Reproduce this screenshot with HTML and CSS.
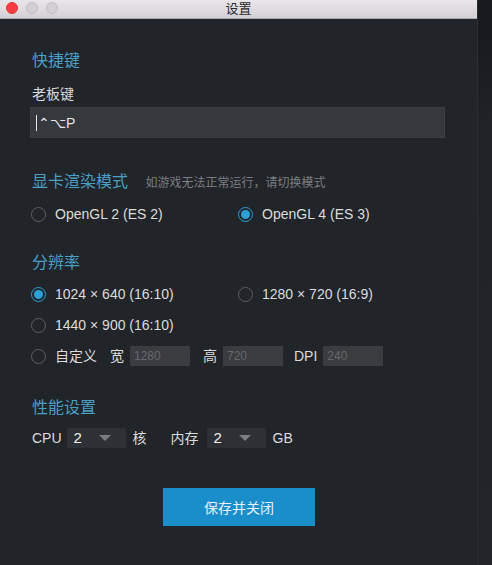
FILE: index.html
```html
<!DOCTYPE html>
<html lang="zh-CN">
<head>
    <meta charset="UTF-8">
    <title>设置</title>
    <link rel="stylesheet" href="styles.css">
</head>
<body>
    <div class="window">
        <div class="titlebar">
            <div class="lights">
                <span class="light close"></span>
                <span class="light"></span>
                <span class="light"></span>
            </div>
            <span class="title">设置</span>
        </div>

        <div class="content">
            <h2 class="heading">快捷键</h2>
            <div class="label">老板键</div>
            <div class="hotkey"><span class="caret"></span>⌃⌥P</div>

            <h2 class="heading heading-gap">显卡渲染模式 <span class="hint">如游戏无法正常运行，请切换模式</span></h2>
            <div class="radio-grid">
                <label class="radio"><span class="dot"></span>OpenGL 2 (ES 2)</label>
                <label class="radio checked"><span class="dot"></span>OpenGL 4 (ES 3)</label>
            </div>

            <h2 class="heading heading-gap-sm">分辨率</h2>
            <div class="radio-grid rows">
                <label class="radio checked"><span class="dot"></span>1024 × 640 (16:10)</label>
                <label class="radio"><span class="dot"></span>1280 × 720 (16:9)</label>
                <label class="radio"><span class="dot"></span>1440 × 900 (16:10)</label>
                <span></span>
                <div class="custom">
                    <label class="radio"><span class="dot"></span>自定义</label>
                    <span class="field-label">宽</span>
                    <span class="small-input">1280</span>
                    <span class="field-label">高</span>
                    <span class="small-input">720</span>
                    <span class="field-label dpi">DPI</span>
                    <span class="small-input">240</span>
                </div>
            </div>

            <h2 class="heading heading-gap-md">性能设置</h2>
            <div class="perf">
                <span>CPU</span>
                <span class="select">2<span class="arrow"></span></span>
                <span class="unit">核</span>
                <span class="mem">内存</span>
                <span class="select">2<span class="arrow"></span></span>
                <span class="unit">GB</span>
            </div>

            <div class="actions">
                <button class="save">保存并关闭</button>
            </div>
        </div>
    </div>
    <div class="side"></div>
</body>
</html>
```

FILE: styles.css
```css
* {
    margin: 0;
    padding: 0;
    box-sizing: border-box;
}

body {
    display: flex;
    height: 565px;
    overflow: hidden;
    background: #22252a;
    font-family: "Liberation Sans", "Noto Sans CJK SC", sans-serif;
    color: #d8d8d8;
    font-size: 14px;
    line-height: 20px;
}

.window {
    width: 478px;
    background: #212429;
    border-right: 1px solid #2a2d31;
}

.side {
    flex: 1;
    background: linear-gradient(#171a1e 0, #171a1e 30px, #1f2227 120px, #22252a);
}

.titlebar {
    height: 19px;
    background: linear-gradient(#e9e7e9, #d3d1d3);
    border-bottom: 1px solid #a9a9ab;
    display: flex;
    align-items: center;
    justify-content: center;
    position: relative;
}

.lights {
    position: absolute;
    left: 6px;
    top: 2px;
    display: flex;
    gap: 8px;
}

.light {
    width: 12px;
    height: 12px;
    border-radius: 50%;
    background: #d2d0d2;
    border: 1px solid #c2c0c2;
}

.light.close {
    background: #fc3d3f;
    border-color: #e2383a;
}

.title {
    font-size: 13px;
    color: #2a2a2a;
    line-height: 18px;
}

.content {
    padding: 32px 32px 0;
}

.heading {
    font-size: 16px;
    font-weight: normal;
    color: #4a9fc4;
    line-height: 20px;
}

.heading-gap {
    margin-top: 34px;
}

.heading-gap-sm {
    margin-top: 29px;
}

.heading-gap-md {
    margin-top: 32px;
}

.hint {
    font-size: 12px;
    color: #7b7e82;
    margin-left: 13px;
}

.label {
    margin-top: 13px;
    color: #d8d8d8;
}

.hotkey {
    margin: 3px 0 0 -2px;
    width: 415px;
    height: 31px;
    background: #35383d;
    border: 1px solid #3b3e43;
    padding-left: 5px;
    display: flex;
    align-items: center;
    color: #e6e6e6;
    font-size: 14px;
}

.caret {
    width: 1px;
    height: 16px;
    background: #e6e6e6;
    margin-right: 1px;
}

.radio-grid {
    margin-top: 11px;
    display: grid;
    grid-template-columns: 207px 1fr;
    margin-left: -1px;
}

.radio-grid.rows {
    row-gap: 11px;
    margin-top: 11px;
}

.radio {
    display: flex;
    align-items: center;
    gap: 9px;
    color: #dcdcdc;
    height: 20px;
}

.dot {
    width: 15px;
    height: 15px;
    border-radius: 50%;
    border: 1px solid #5c5f63;
    display: flex;
    align-items: center;
    justify-content: center;
}

.radio.checked .dot {
    border-color: #2a9fd8;
}

.radio.checked .dot::after {
    content: "";
    width: 9px;
    height: 9px;
    border-radius: 50%;
    background: #2a9fd8;
}

.custom {
    grid-column: 1 / 3;
    display: flex;
    align-items: center;
}

.field-label {
    margin: 0 6px 0 13px;
    color: #dcdcdc;
}

.field-label.dpi {
    margin-left: 11px;
}

.small-input {
    width: 60px;
    height: 20px;
    background: #3a3c40;
    color: #65686c;
    font-size: 12px;
    padding-left: 4px;
    line-height: 20px;
}

.perf {
    margin-top: 10px;
    display: flex;
    align-items: center;
    color: #dcdcdc;
}

.select {
    width: 59px;
    height: 20px;
    background: #2d3035;
    margin-left: 5px;
    padding-left: 7px;
    display: flex;
    align-items: center;
    color: #f0f0f0;
    font-size: 15px;
}

.mem + .select {
    margin-left: 8px;
}

.arrow {
    margin-left: 17px;
    border-left: 6px solid transparent;
    border-right: 6px solid transparent;
    border-top: 6px solid #7a7d81;
}

.unit {
    margin-left: 7px;
}

.mem {
    margin-left: 24px;
}

.actions {
    margin: 40px 0 0 -32px;
    width: 478px;
    display: flex;
    justify-content: center;
}

.save {
    width: 152px;
    height: 38px;
    background: #1a8ecb;
    color: #e8f1f7;
    border: none;
    font-family: inherit;
    font-size: 14px;
}
```
